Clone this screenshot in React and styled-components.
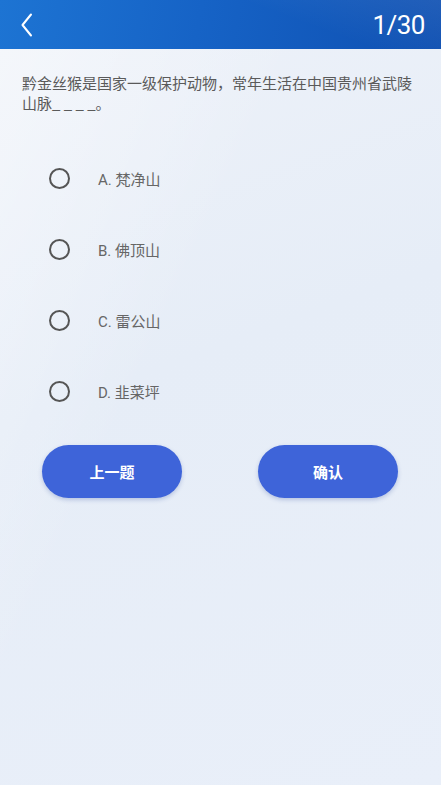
import React, { useState } from 'react'
import styled, { createGlobalStyle } from 'styled-components'

const GlobalStyle = createGlobalStyle`
    html, body {
        margin: 0;
        padding: 0;
    }
    body {
        font-family: Roboto, "Noto Sans CJK SC", sans-serif;
        background: #e9eff8;
    }
`

const Page = styled.div`
    width: 441px;
    min-height: 785px;
    display: flex;
    flex-direction: column;
    background:
        linear-gradient(115deg, rgba(255,255,255,0.45) 0%, rgba(255,255,255,0) 40%),
        linear-gradient(160deg, #eef2f9 0%, #e6edf7 45%, #e9eff9 100%);
`

const Header = styled.div`
    height: 49px;
    display: flex;
    align-items: center;
    justify-content: space-between;
    padding: 0 16px 0 20px;
    background:
        linear-gradient(200deg, rgba(255,255,255,0.08) 0%, rgba(255,255,255,0) 35%),
        linear-gradient(100deg, #1d74d3 0%, #1663c6 45%, #0f50b2 100%);
`

const BackButton = styled.button`
    background: none;
    border: none;
    padding: 0;
    width: 20px;
    height: 30px;
    display: flex;
    align-items: center;
    cursor: pointer;
`

const Counter = styled.span`
    color: #fff;
    font-size: 26px;
    font-family: Roboto, sans-serif;
    letter-spacing: -0.5px;
`

const Body = styled.div`
    padding: 24px 22px 0 22px;
`

const Question = styled.p`
    margin: 0;
    font-size: 15px;
    line-height: 20px;
    color: #5a5a5a;
    font-family: "Noto Sans CJK SC", sans-serif;
`

const Options = styled.div`
    display: flex;
    flex-direction: column;
    margin-top: 30px;
    padding-left: 49px;
`

const Option = styled.label`
    display: flex;
    align-items: center;
    height: 71px;
    cursor: pointer;
`

const Radio = styled.span`
    width: 17px;
    height: 17px;
    border-radius: 50%;
    border: 2px solid ${p => (p.checked ? '#3c63d9' : '#555')};
    box-sizing: content-box;
    display: flex;
    align-items: center;
    justify-content: center;
    &::after {
        content: '';
        width: 9px;
        height: 9px;
        border-radius: 50%;
        background: ${p => (p.checked ? '#3c63d9' : 'transparent')};
    }
`

const OptionText = styled.span`
    margin-left: 28px;
    font-size: 15px;
    color: #666;
    font-family: Roboto, "Noto Sans CJK SC", sans-serif;
`

const Actions = styled.div`
    display: flex;
    justify-content: space-between;
    padding: 0 43px 0 42px;
    margin-top: 18px;
`

const PillButton = styled.button`
    width: 140px;
    height: 53px;
    border: none;
    border-radius: 27px;
    background: #3e64d9;
    color: #fff;
    font-size: 15px;
    font-weight: bold;
    font-family: "Noto Sans CJK SC", sans-serif;
    box-shadow: 0 2px 4px rgba(40, 70, 160, 0.25);
    cursor: pointer;
`

const options = ['A. 梵净山', 'B. 佛顶山', 'C. 雷公山', 'D. 韭菜坪']

const App = () => {
    const [picked, setPicked] = useState(null)
    return (
        <>
            <GlobalStyle />
            <Page>
                <Header>
                    <BackButton>
                        <svg width="13" height="24" viewBox="0 0 13 24">
                            <path d="M11 1.5 L2.5 12 L11 22.5" fill="none" stroke="#fff" strokeWidth="2" strokeLinecap="round" strokeLinejoin="round" />
                        </svg>
                    </BackButton>
                    <Counter>1/30</Counter>
                </Header>
                <Body>
                    <Question>黔金丝猴是国家一级保护动物，常年生活在中国贵州省武陵山脉_ _ _ _。</Question>
                </Body>
                <Options>
                    {options.map((o, i) => (
                        <Option key={o} onClick={() => setPicked(i)}>
                            <Radio checked={picked === i} />
                            <OptionText>{o}</OptionText>
                        </Option>
                    ))}
                </Options>
                <Actions>
                    <PillButton>上一题</PillButton>
                    <PillButton>确认</PillButton>
                </Actions>
            </Page>
        </>
    )
}

export default App
